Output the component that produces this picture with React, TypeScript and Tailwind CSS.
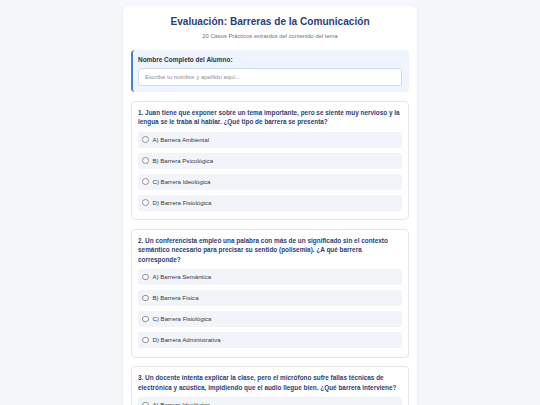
const questions = [
  {
    text: "1. Juan tiene que exponer sobre un tema importante, pero se siente muy nervioso y la lengua se le traba al hablar. ¿Qué tipo de barrera se presenta?",
    options: ["A) Barrera Ambiental", "B) Barrera Psicológica", "C) Barrera Ideológica", "D) Barrera Fisiológica"],
  },
  {
    text: "2. Un conferencista empleó una palabra con más de un significado sin el contexto semántico necesario para precisar su sentido (polisemia). ¿A qué barrera corresponde?",
    options: ["A) Barrera Semántica", "B) Barrera Física", "C) Barrera Fisiológica", "D) Barrera Administrativa"],
  },
  {
    text: "3. Un docente intenta explicar la clase, pero el micrófono sufre fallas técnicas de electrónica y acústica, impidiendo que el audio llegue bien. ¿Qué barrera interviene?",
    options: ["A) Barrera Ideológica", "B) Barrera Física", "C) Barrera Semántica", "D) Barrera Psicológica"],
  },
]

function Question({ text, options }: { text: string; options: string[] }) {
  return (
    <div className="mt-[8.5px] rounded-[4px] border border-[#e3e7ee] bg-white px-[6px] pt-[6px] pb-[8.5px]">
      <p className="pr-[2px] text-[6.42px] font-bold leading-[9.5px] text-[#2c3e7a]">{text}</p>
      <div className="mt-[5px] flex flex-col gap-[5px]">
        {options.map((opt) => (
          <label
            key={opt}
            className="flex h-[16px] items-center gap-[4px] rounded-[3px] bg-[#f1f4f8] pl-[4px] text-[6.1px] text-[#333a45]"
          >
            <span className="h-[6.5px] w-[6.5px] rounded-full border-[0.8px] border-[#8a8f98] bg-white" />
            <span>{opt}</span>
          </label>
        ))}
      </div>
    </div>
  )
}

export default function App() {
  return (
    <div className="min-h-[405px] bg-[#f5f7fa] pt-[6px] font-['Liberation_Sans',Arial,sans-serif]">
      <div className="mx-auto w-[294px] rounded-[6px] bg-white px-[8px] pt-[9px] pb-[10px] shadow-[0_1px_4px_rgba(0,0,0,0.06)]">
        <h1 className="text-center text-[10.1px] font-bold leading-[14px] text-[#2c3e7a]">
          Evaluación: Barreras de la Comunicación
        </h1>
        <p className="mt-[4px] text-center text-[5.8px] leading-[6px] text-[#6b7280]">
          20 Casos Prácticos extraídos del contenido del tema
        </p>

        <div className="mt-[11px] mb-[0.5px] rounded-[4px] border-l-[2px] border-[#4a7fd6] bg-[#eef5fe] pt-[7px] pr-[7px] pb-[6px] pl-[5px]">
          <p className="text-[6.45px] font-bold leading-[6px] text-[#2d3340]">Nombre Completo del Alumno:</p>
          <div className="mt-[5px] flex h-[18px] items-center rounded-[3px] border border-[#d6dce5] bg-white px-[6px] text-[6.1px] text-[#8b919b]">
            Escribe tu nombre y apellido aquí...
          </div>
        </div>

        {questions.map((q, i) => (
          <Question key={i} text={q.text} options={q.options} />
        ))}
      </div>
    </div>
  )
}
